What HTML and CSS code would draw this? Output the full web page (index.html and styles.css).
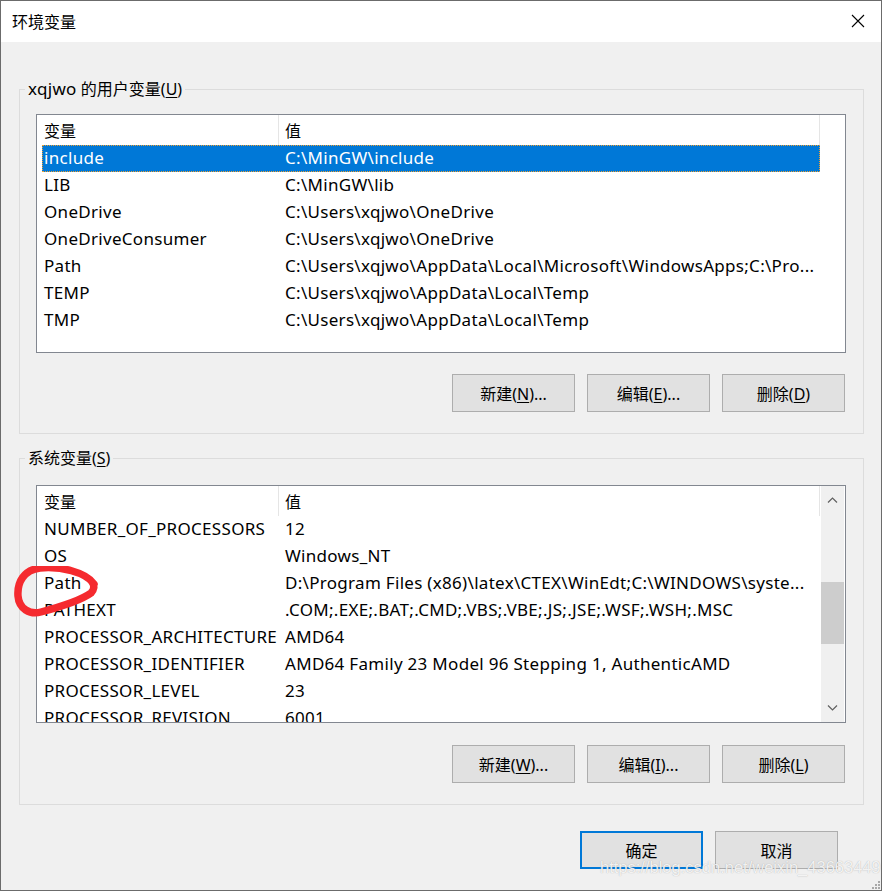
FILE: index.html
```html
<!DOCTYPE html>
<html lang="zh-CN">
<head>
<meta charset="utf-8">
<title>环境变量</title>
<link rel="stylesheet" href="styles.css">
</head>
<body>
<div class="window">
  <div class="titlebar">
    <span class="title">环境变量</span>
    <svg class="close" width="14" height="14" viewBox="0 0 14 14"><path d="M1 1 L13 13 M13 1 L1 13" stroke="#000" stroke-width="1.1" fill="none"/></svg>
  </div>
  <div class="content">
    <fieldset class="group group-user">
      <legend><span class="lat">xqjwo</span> 的用户变量(<u>U</u>)</legend>
      <div class="list">
        <div class="list-main">
          <div class="list-header"><div class="h1">变量</div><div class="h2">值</div></div>
          <div class="row selected"><span class="c1">include</span><span class="c2">C:\MinGW\include</span></div>
          <div class="row"><span class="c1">LIB</span><span class="c2">C:\MinGW\lib</span></div>
          <div class="row"><span class="c1">OneDrive</span><span class="c2">C:\Users\xqjwo\OneDrive</span></div>
          <div class="row"><span class="c1">OneDriveConsumer</span><span class="c2">C:\Users\xqjwo\OneDrive</span></div>
          <div class="row"><span class="c1">Path</span><span class="c2">C:\Users\xqjwo\AppData\Local\Microsoft\WindowsApps;C:\Pro...</span></div>
          <div class="row"><span class="c1">TEMP</span><span class="c2">C:\Users\xqjwo\AppData\Local\Temp</span></div>
          <div class="row"><span class="c1">TMP</span><span class="c2">C:\Users\xqjwo\AppData\Local\Temp</span></div>
        </div>
      </div>
      <div class="btn-row">
        <button class="btn">新建(<u>N</u>)...</button>
        <button class="btn">编辑(<u>E</u>)...</button>
        <button class="btn">删除(<u>D</u>)</button>
      </div>
    </fieldset>

    <fieldset class="group group-sys">
      <legend>系统变量(<u>S</u>)</legend>
      <div class="list">
        <div class="list-main">
          <div class="list-header"><div class="h1">变量</div><div class="h2">值</div></div>
          <div class="row"><span class="c1">NUMBER_OF_PROCESSORS</span><span class="c2">12</span></div>
          <div class="row"><span class="c1">OS</span><span class="c2">Windows_NT</span></div>
          <div class="row"><span class="c1">Path</span><span class="c2">D:\Program Files (x86)\latex\CTEX\WinEdt;C:\WINDOWS\syste...</span></div>
          <div class="row"><span class="c1">PATHEXT</span><span class="c2">.COM;.EXE;.BAT;.CMD;.VBS;.VBE;.JS;.JSE;.WSF;.WSH;.MSC</span></div>
          <div class="row"><span class="c1">PROCESSOR_ARCHITECTURE</span><span class="c2">AMD64</span></div>
          <div class="row"><span class="c1">PROCESSOR_IDENTIFIER</span><span class="c2">AMD64 Family 23 Model 96 Stepping 1, AuthenticAMD</span></div>
          <div class="row"><span class="c1">PROCESSOR_LEVEL</span><span class="c2">23</span></div>
          <div class="row"><span class="c1">PROCESSOR_REVISION</span><span class="c2">6001</span></div>
        </div>
        <div class="scrollbar">
          <svg class="arrow" width="23" height="28" viewBox="0 0 23 28"><polyline points="7,16.5 11.5,12 16,16.5" stroke="#606060" stroke-width="1.2" fill="none"/></svg>
          <div class="track"><div class="thumb"></div></div>
          <svg class="arrow" width="23" height="28" viewBox="0 0 23 28"><polyline points="7,11.5 11.5,16 16,11.5" stroke="#606060" stroke-width="1.2" fill="none"/></svg>
        </div>
      </div>
      <div class="btn-row">
        <button class="btn">新建(<u>W</u>)...</button>
        <button class="btn">编辑(<u>I</u>)...</button>
        <button class="btn">删除(<u>L</u>)</button>
      </div>
    </fieldset>

    <div class="footer">
      <button class="btn btn-default">确定</button>
      <button class="btn">取消</button>
    </div>
  </div>

  <svg class="annotation" width="100" height="60" viewBox="0 0 100 60">
    <path d="M 94 18 C 86 6, 60 0, 40 2 C 24 4, 17 16, 18 30 C 19 43, 30 49, 41 46 C 56 42, 80 35, 91 27 C 94 24, 95 20, 92 16" stroke="#f52a2f" stroke-width="7.5" fill="none" stroke-linecap="round" stroke-linejoin="round"/>
  </svg>
  <div class="watermark">https://blog.csdn.net/weixin_43663449</div>
  <svg class="grip" width="10" height="10" viewBox="0 0 10 10">
    <rect x="7" y="1" width="2" height="2" fill="#a8a8a8"/>
    <rect x="4" y="4" width="2" height="2" fill="#a8a8a8"/>
    <rect x="7" y="4" width="2" height="2" fill="#a8a8a8"/>
    <rect x="1" y="7" width="2" height="2" fill="#a8a8a8"/>
    <rect x="4" y="7" width="2" height="2" fill="#a8a8a8"/>
    <rect x="7" y="7" width="2" height="2" fill="#a8a8a8"/>
  </svg>
</div>
</body>
</html>
```

FILE: styles.css
```css
* { box-sizing: border-box; }
html, body { margin: 0; padding: 0; background: #f0f0f0; }
body {
  font-family: "Noto Sans", "Noto Sans CJK SC", sans-serif;
  font-size: 16px;
  color: #000;
}
.window {
  position: relative;
  width: 882px;
  height: 891px;
  border: 1px solid #6b6b6b;
  background: #f0f0f0;
  display: flex;
  flex-direction: column;
  overflow: hidden;
}
.titlebar {
  height: 41px;
  background: #fff;
  display: flex;
  align-items: center;
  justify-content: space-between;
  padding: 0 16px 0 11px;
  flex: none;
}
.title {
  font-family: "Noto Sans CJK SC", sans-serif;
  font-size: 16px;
  line-height: 20px;
  margin-top: -1px;
}
.close { margin-top: -1px; }
.content {
  padding: 37px 17px 0 18px;
  display: flex;
  flex-direction: column;
}
.group {
  margin: 0;
  border: 1px solid #dcdcdc;
  padding: 15px 17px 21px 16px;
  min-width: 0;
}
.group-sys {
  margin-top: 14px;
  padding-top: 17px;
}
.group legend {
  margin-left: -11px;
  padding: 0 3px;
  line-height: 20px;
  font-size: 16px;
  font-family: "Noto Sans", "Noto Sans CJK SC", sans-serif;
}
.lat { font-size: 17px; letter-spacing: 0.3px; }
u { text-decoration: underline; text-underline-offset: 2px; }
.list {
  height: 239px;
  border: 1px solid #828790;
  background: #fff;
  display: flex;
  overflow: hidden;
}
.group-sys .list { height: 238px; }
.list-main {
  flex: 1;
  min-width: 0;
  overflow: hidden;
}
.list-header {
  height: 30px;
  display: flex;
  padding-left: 5px;
  line-height: 30px;
  font-family: "Noto Sans CJK SC", sans-serif;
}
.h1 {
  width: 237px;
  padding-left: 2px;
  border-right: 1px solid #e5e5e5;
}
.h2 {
  width: 541px;
  padding-left: 6px;
  border-right: 1px solid #e5e5e5;
}
.row {
  height: 27px;
  width: 778px;
  margin-left: 5px;
  display: flex;
  align-items: center;
  border: 1px solid transparent;
  padding-bottom: 2px;
  line-height: 23px;
  white-space: nowrap;
  font-size: 17px;
  letter-spacing: 0.3px;
}
.row.selected {
  background: #0078d7;
  color: #fff;
  border: 1px dotted #f0a030;
}
.c1 { width: 240px; padding-left: 1px; flex: none; overflow: hidden; }
.c2 { padding-left: 2px; }
.scrollbar {
  width: 23px;
  margin-right: 1px;
  background: #f0f0f0;
  display: flex;
  flex-direction: column;
  flex: none;
}
.arrow { display: block; flex: none; }
.track {
  flex: 1;
  padding-top: 68px;
}
.thumb {
  height: 62px;
  background: #cdcdcd;
}
.btn-row {
  display: flex;
  justify-content: flex-end;
  gap: 12px;
  margin-top: 21px;
  padding-right: 1px;
}
.group-sys .btn-row { margin-top: 22px; }
.btn {
  width: 123px;
  height: 38px;
  background: #e1e1e1;
  border: 1px solid #adadad;
  font-family: "Noto Sans", "Noto Sans CJK SC", sans-serif;
  font-size: 16px;
  color: #000;
  padding: 0;
  margin: 0;
}
.btn-default { border: 2px solid #0078d7; }
.footer {
  display: flex;
  justify-content: flex-end;
  gap: 12px;
  margin-top: 26px;
  padding-right: 26px;
}
.annotation {
  position: absolute;
  left: -1px;
  top: 565px;
}
.watermark {
  position: absolute;
  left: 599px;
  top: 857px;
  font-family: "Liberation Sans", sans-serif;
  font-size: 16.5px;
  color: rgba(255, 255, 255, 0.85);
  text-shadow: 0 0 1px rgba(120, 120, 120, 0.6);
  white-space: nowrap;
}
.grip {
  position: absolute;
  right: 0;
  bottom: 0;
}
```
